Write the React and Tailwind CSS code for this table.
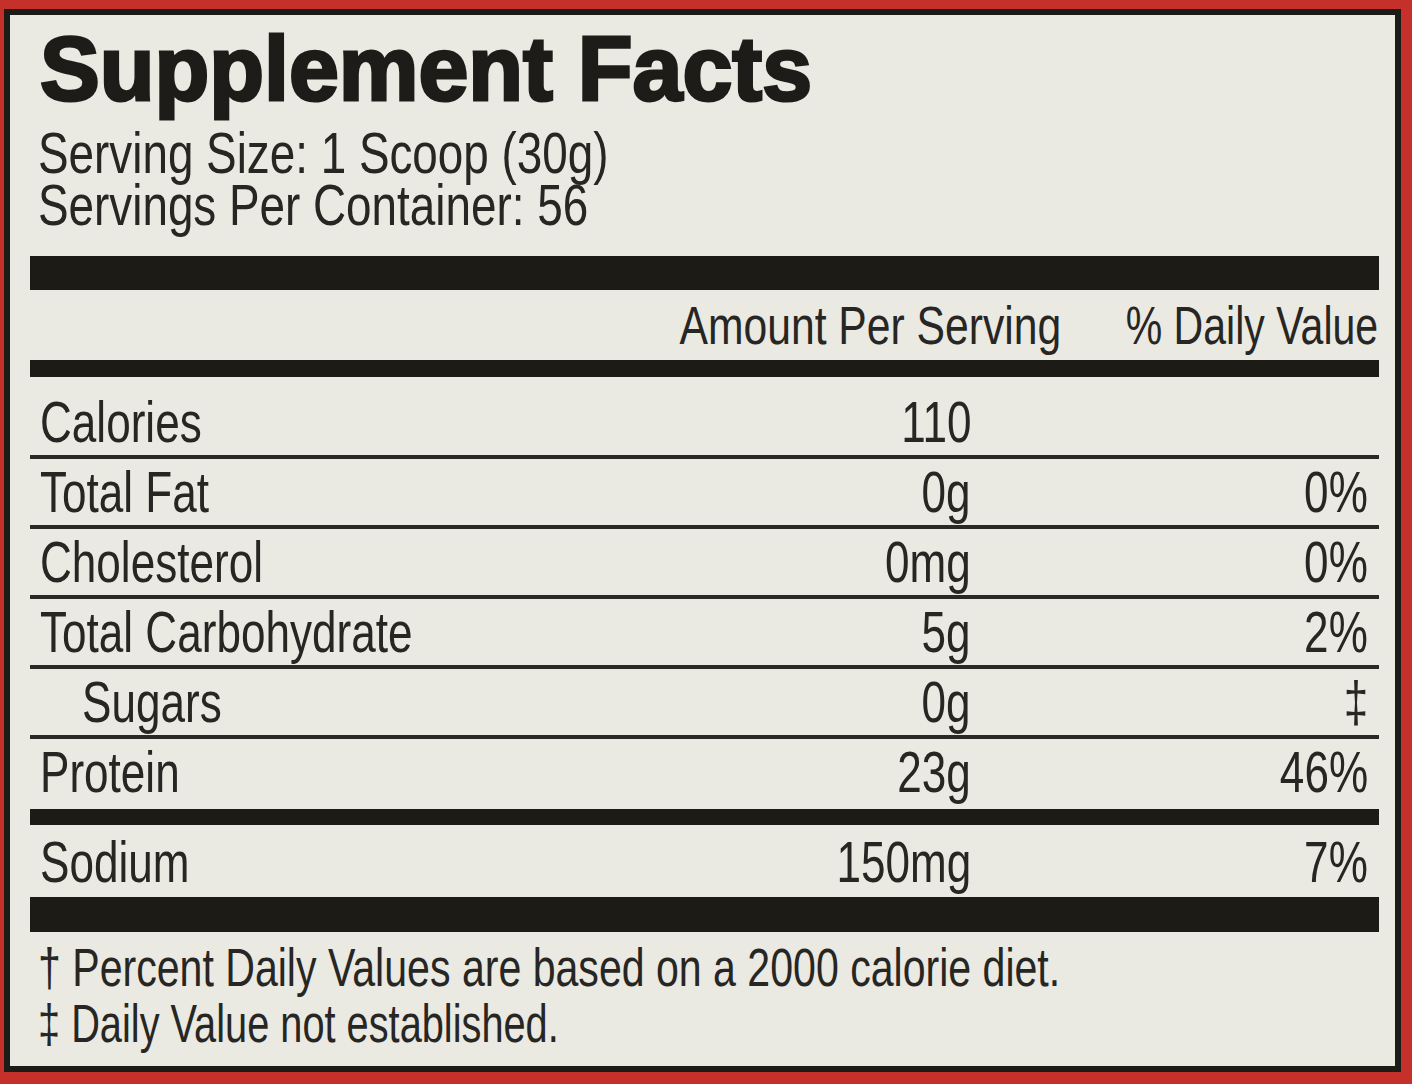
import React from 'react';

const ROWS = [
  { label: 'Total Fat', amount: '0g', dv: '0%' },
  { label: 'Cholesterol', amount: '0mg', dv: '0%' },
  { label: 'Total Carbohydrate', amount: '5g', dv: '2%' },
  { label: 'Sugars', amount: '0g', dv: '‡', indent: true },
];

const SCALES = {
  row: 'scale-x-[0.76]',
  wide: 'scale-x-[0.79]',
  note: 'scale-x-[0.775]',
  tight: 'scale-x-[0.75]',
};

// condensed face: Liberation Sans squeezed horizontally
function Narrow({ children, right, scale = 'row' }) {
  return (
    <span className={`inline-block whitespace-nowrap ${right ? 'origin-right' : 'origin-left'} ${SCALES[scale]}`}>
      {children}
    </span>
  );
}

function Rule() {
  return <div className="h-[4px] bg-[#2a2925]" />;
}

function Row({ label, amount, dv, indent, className = 'h-[66px]' }) {
  return (
    <div className={`flex text-[58px] leading-[66px] ${className}`}>
      <div className={`flex-1 ${indent ? 'pl-[52px]' : 'pl-[10px]'}`}>
        <Narrow>{label}</Narrow>
      </div>
      <div className="flex w-[300px] justify-end">
        <Narrow right>{amount}</Narrow>
      </div>
      <div className="flex w-[408px] justify-end pr-[11px]">
        {dv && <Narrow right>{dv}</Narrow>}
      </div>
    </div>
  );
}

export default function App() {
  return (
    <div className="w-[1412px] h-[1084px] bg-[#c5312a] pt-[9px] pl-[4px] pr-[11px] pb-[12px] font-['Liberation_Sans',Arial,sans-serif] text-[#272622]">
      <div className="h-full border-[6px] border-[#1c1b18] bg-[#eae9e2] pl-[20px] pr-[16px]">
        <h1 className="h-[107px] pl-[10px] text-[91px] leading-[107px] font-bold text-[#1d1c19] [-webkit-text-stroke:3px_#1d1c19]">
          <span className="inline-block origin-left scale-x-[0.985] whitespace-nowrap">Supplement Facts</span>
        </h1>
        <div className="pl-[8px] text-[58px]">
          <div className="h-[62px] leading-[62px]">
            <Narrow scale="wide">Serving Size: 1 Scoop (30g)</Narrow>
          </div>
          <div className="h-[42px] leading-[42px]">
            <Narrow scale="wide">Servings Per Container: 56</Narrow>
          </div>
        </div>

        <div className="mt-[30px] h-[34px] bg-[#1c1b16]" />

        <div className="flex h-[70px] text-[54px] leading-[70px]">
          <div className="flex flex-1 justify-end">
            <Narrow right scale="wide">Amount Per Serving</Narrow>
          </div>
          <div className="flex w-[318px] justify-end pr-[1px]">
            <Narrow right>% Daily Value</Narrow>
          </div>
        </div>

        <div className="h-[17px] bg-[#1c1b16]" />

        <Row label="Calories" amount="110" className="h-[78px] pt-[12px]" />
        <Rule />
        {ROWS.map(r => (
          <React.Fragment key={r.label}>
            <Row {...r} />
            <Rule />
          </React.Fragment>
        ))}
        <Row label="Protein" amount="23g" dv="46%" className="h-[70px] pb-[4px]" />

        <div className="h-[16px] bg-[#1c1b16]" />

        <Row label="Sodium" amount="150mg" dv="7%" className="h-[72px] pt-[4px]" />

        <div className="h-[35px] bg-[#1c1b16]" />

        <div className="pt-[8px] pl-[8px] text-[53px] leading-[56px]">
          <div className="h-[56px]">
            <Narrow scale="note">† Percent Daily Values are based on a 2000 calorie diet.</Narrow>
          </div>
          <div className="h-[56px]">
            <Narrow scale="tight">‡ Daily Value not established.</Narrow>
          </div>
        </div>
      </div>
    </div>
  );
}
